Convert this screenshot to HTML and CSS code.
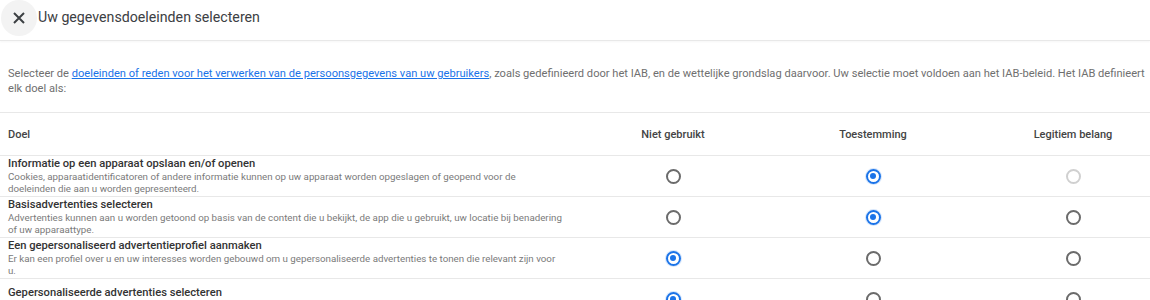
FILE: index.html
```html
<!DOCTYPE html>
<html lang="nl">
<head>
<meta charset="utf-8">
<link rel="stylesheet" href="styles.css">
</head>
<body>
<header class="topbar">
  <button class="close" aria-label="Sluiten">
    <svg width="14" height="14" viewBox="0 0 14 14"><path d="M2 2 L12 12 M12 2 L2 12" stroke="#3c4043" stroke-width="2" fill="none"/></svg>
  </button>
  <h1 class="title">Uw gegevensdoeleinden selecteren</h1>
</header>
<p class="intro">Selecteer de <a href="#">doeleinden of reden voor het verwerken van de persoonsgegevens van uw gebruikers</a>, zoals gedefinieerd door het IAB, en de wettelijke grondslag daarvoor. Uw selectie moet voldoen aan het IAB-beleid. Het IAB definieert elk doel als:</p>
<div class="table">
  <div class="row head">
    <div class="cell purpose">Doel</div>
    <div class="cell col">Niet gebruikt</div>
    <div class="cell col">Toestemming</div>
    <div class="cell col">Legitiem belang</div>
  </div>
  <div class="row">
    <div class="cell purpose">
      <div class="ptitle">Informatie op een apparaat opslaan en/of openen</div>
      <div class="pdesc">Cookies, apparaatidentificatoren of andere informatie kunnen op uw apparaat worden opgeslagen of geopend voor de doeleinden die aan u worden gepresenteerd.</div>
    </div>
    <div class="cell col"><span class="radio"></span></div>
    <div class="cell col"><span class="radio on"></span></div>
    <div class="cell col"><span class="radio off"></span></div>
  </div>
  <div class="row">
    <div class="cell purpose">
      <div class="ptitle">Basisadvertenties selecteren</div>
      <div class="pdesc">Advertenties kunnen aan u worden getoond op basis van de content die u bekijkt, de app die u gebruikt, uw locatie bij benadering of uw apparaattype.</div>
    </div>
    <div class="cell col"><span class="radio"></span></div>
    <div class="cell col"><span class="radio on"></span></div>
    <div class="cell col"><span class="radio"></span></div>
  </div>
  <div class="row">
    <div class="cell purpose">
      <div class="ptitle">Een gepersonaliseerd advertentieprofiel aanmaken</div>
      <div class="pdesc">Er kan een profiel over u en uw interesses worden gebouwd om u gepersonaliseerde advertenties te tonen die relevant zijn voor u.</div>
    </div>
    <div class="cell col"><span class="radio on"></span></div>
    <div class="cell col"><span class="radio"></span></div>
    <div class="cell col"><span class="radio"></span></div>
  </div>
  <div class="row">
    <div class="cell purpose">
      <div class="ptitle">Gepersonaliseerde advertenties selecteren</div>
      <div class="pdesc">Gepersonaliseerde advertenties kunnen aan u worden getoond op basis van een profiel over u.</div>
    </div>
    <div class="cell col"><span class="radio on"></span></div>
    <div class="cell col"><span class="radio"></span></div>
    <div class="cell col"><span class="radio"></span></div>
  </div>
</div>
</body>
</html>
```
FILE: styles.css
```css
html, body {
  margin: 0;
  padding: 0;
  background: #fff;
  overflow: hidden;
  font-family: Roboto, "Liberation Sans", Arial, sans-serif;
  color: #3c4043;
}
body {
  width: 1150px;
  height: 300px;
}
.topbar {
  display: flex;
  align-items: center;
  height: 40px;
  border-bottom: 1px solid #e8e8e8;
  box-shadow: 0 1px 2px rgba(0,0,0,0.04);
}
.close {
  width: 36px;
  height: 36px;
  margin-left: 1px;
  margin-top: -4px;
  border: 0;
  border-radius: 50%;
  background: #f3f3f3;
  display: flex;
  align-items: center;
  justify-content: center;
  padding: 0;
}
.title {
  margin: -6px 0 0 1px;
  font-size: 14.2px;
  font-weight: 400;
  color: #3c4043;
}
.intro {
  margin: 25px 0 0 0;
  padding: 0 0 15px 8px;
  font-size: 11.12px;
  line-height: 15px;
  color: #6f6f6f;
  height: 31px;
  border-bottom: 1px solid #e8e8e8;
}
.intro a {
  color: #1a73e8;
  text-decoration: underline;
}
.table {
  width: 1174px;
}
.row {
  display: grid;
  grid-template-columns: 573px 200px 200px 200px;
  border-bottom: 1px solid #e8e8e8;
  height: 40px;
}
.row.head {
  height: 42px;
  font-size: 11px;
  font-weight: 500;
  color: #444;
}
.cell {
  display: flex;
  align-items: center;
}
.purpose {
  padding-left: 8px;
  flex-direction: column;
  align-items: flex-start;
  justify-content: center;
}
.col {
  justify-content: center;
}
.ptitle {
  font-size: 11.2px;
  font-weight: 500;
  line-height: 14px;
  color: #333;
}
.pdesc {
  width: 556px;
  font-size: 9.75px;
  line-height: 12px;
  color: #7a7a7a;
}
.radio {
  width: 11px;
  height: 11px;
  border: 2px solid #6b6b6b;
  border-radius: 50%;
  box-sizing: content-box;
  position: relative;
}
.radio.on {
  border-color: #1a73e8;
  box-shadow: 0 0 0 1px rgba(26,115,232,0.18);
}
.radio.on::after {
  content: "";
  position: absolute;
  left: 2.5px;
  top: 2.5px;
  width: 6px;
  height: 6px;
  border-radius: 50%;
  background: #1a73e8;
}
.radio.off {
  border-color: #d0d0d0;
}
```
